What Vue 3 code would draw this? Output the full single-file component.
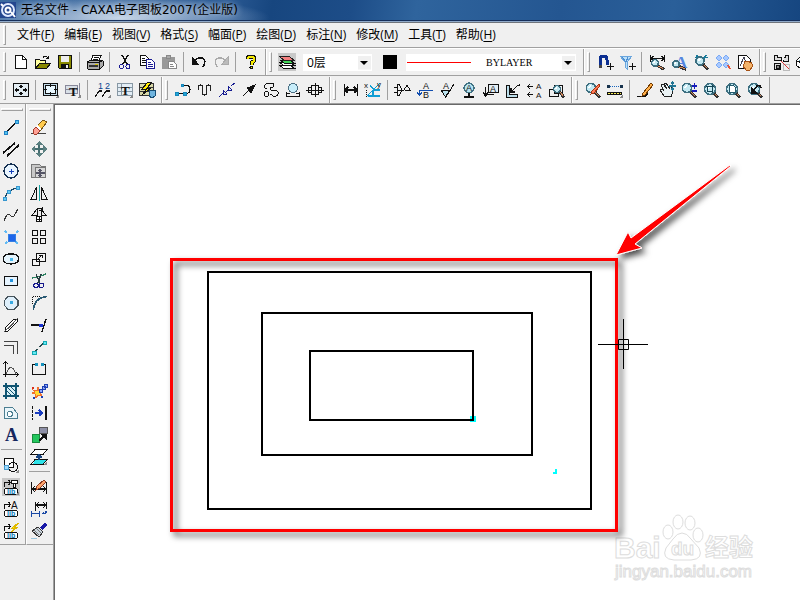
<script setup>
import { h } from 'vue'

// Shape helpers: every icon is a list of paths and letters on an 18 x 18 grid.
const K = '#111'
const p = (d, stroke = K, fill = 'none', w = 1) => ({ d, stroke, fill, w })
const t = (text, x, y, size, fill = K, family = 'Liberation Sans', weight = 400) => ({ text, x, y, size, fill, family, weight })
const circle = (x, y, r) => `M${x - r} ${y}a${r} ${r} 0 1 0 ${2 * r} 0a${r} ${r} 0 1 0 ${-2 * r} 0z`
const lens = (x, y, r) => [
  p(`M${x + r * 0.7} ${y + r * 0.7}L16 16.5`, '#333', 'none', 3),
  p(`M${x + r} ${y + r}L15.5 15.5`, '#d98a5a'),
  p(circle(x, y, r), '#3d6f80', '#c4e9f2', 1.6),
  p(`M${x - r / 2} ${y}l${r / 2} ${-r / 2}`, '#fff', 'none', 1.5)
]
const corner = p('M17 13v4h-4z', 'none', '#888')
const plusMark = p('M14.5 10v7M11 13.5h7')
const lib = [
  p('M3.5 10.5h11l1 1v4l-1 1h-11l-1-1v-4z', K, '#fff', 1),
  t('lib', 5, 16, 7, '#0879b8', 'Liberation Sans', 700)
]
const bend = p('M2.5 8.5v-4h6M6.5 2l2 2.5-2 2.5', K, 'none', 1.2)

const icons = {
  'New': [p('M3.5 2.5h7l4 4v9h-11z', K, '#fff'), p('M10.5 2.5v4h4')],
  'Open': [p('M1.5 15.5v-9h4l1 1h5v3', K, '#ffffa0'), p('M1.5 15.5l4-5h11l-4 5z', K, '#8a8a00'), p('M9 4.5q3-3 5 .5M14.5 2.5v3h-3')],
  'Save': [p('M2.5 2.5h13v13h-12l-1-1z', K, '#8a8a00'), p('M5 3h8v6H5z', 'none', '#eee'), p('M5 11h8v5H5z', 'none', K), p('M10 12h2v3h-2z', 'none', '#eee')],
  'Print': [p('M5 8l2-5.5h8L13 8z', K, '#fff'), p('M7.5 4.5h5M6.5 6.5h5'), p('M1.5 9l3-2h11l1.5 1v5l-3 3h-12z', K, '#aaa'), p('M2 9.5h11.5v6M13.5 9l3-1.5'), p('M3 13h9', '#333', 'none', 2), p('M9 11.5h3', '#d8c400', 'none', 1)],
  'Cut': [p('M6 2l5 9M12 2L7 11', K, 'none', 1.4), p(circle(5.5, 13.5, 2), '#1c1c94'), p(circle(12, 13.5, 2), '#1c1c94')],
  'Copy': [p('M2.5 2.5h5l3 3v7h-8z', K, '#fff'), p('M4 5.5h3M4 7.5h4M4 9.5h4'), p('M8.5 6.5h5l3 3v6h-8z', '#1c1c94', '#fff'), p('M10 9.5h3M10 11.5h5M10 13.5h5', '#1c1c94')],
  'Paste': [p('M2 4h12v11H2z', '#999', '#999'), p('M6 2h4v3H6z', '#888', '#aaa'), p('M8.5 8.5h5l3 3v4h-8z', '#888', '#fff'), p('M10 11.5h3M10 13.5h4', '#888')],
  'Undo': [p('M4 9Q7 4 12 5q5 2 1 9', K, 'none', 1.7), p('M2 4v7h6z', K, K)],
  'Redo': [p('M14 9Q11 4 6 5q-5 2-1 9', '#aaa', 'none', 1.4), p('M16 4v7h-6z', '#aaa', '#bbb')],
  'Help': [p('M5.5 6Q5.5 3.5 9 3.5t3.5 3Q12.5 9 9.5 9.5v2', K, 'none', 4), p(circle(9.5, 14.5, 1.5), K, '#f4e900'), p('M5.5 6Q5.5 3.5 9 3.5t3.5 3Q12.5 9 9.5 9.5v2', '#f4e900', 'none', 2)],
  'Layers': [p('M1 12h10l6 3.5H6zM1 9h10l6 3.5H6z', K, '#fff'), p('M2 7h9l6 3.5H7z', K, '#43d65a'), p('M1 3h10l5 4.5H6z', '#222', '#f58080')],
  'Snap': [p('M4 13V7q0-4 3.5-4T11 7v5', '#0c2f91', 'none', 3), p('M2.5 12h3v3h-3z', 'none', '#444'), plusMark],
  'Filter': [p('M2 3h12L9 9v7l-2-2V9z', '#6ba6dd', '#bde1fa'), p('M4 4l4 5 2-5', '#4b8ed2'), plusMark],
  'Check dimension': [p('M2.5 2v7M16.5 2v7M3 5.5h13M6 3L3 5.5 6 8M13 3l3 2.5L13 8', K, 'none', 1.2), ...lens(7, 10, 3.4)],
  'Check text': [t('A', 5, 15, 17, '#5585df', 'Liberation Serif', 700), ...lens(6, 11, 3)],
  'Check drawing': [p('M3 4.5h13M5 2v5M14 2L7 13', '#177a9a', 'none', 1.5), ...lens(8, 8, 4)],
  'Check blocks': [p('M5 2l3 3-3 3-3-3zM12 2l3 3-3 3-3-3zM5 9l3 3-3 3-3-3zM12 9l3 3-3 3-3-3z', '#79a9f5', '#a8c9ff'), p('M14 12l2 4', '#e65335', 'none', 2)],
  'Pan page': [p('M2.5 2.5h8l4 4v9h-12z', K, '#fff'), p('M4 13l4-9 3 8', '#445'), p('M8 11v-2q1-1 2 0 1-2 2 0 2-1 2 1 2-1 2 1v3l-2 3h-4l-3-4z', '#a65216', '#f4b36a')],
  'Nest parts': [p('M2.5 2.5h3v2h4v3h-7zM12 4.5h1.5v-2h3v6h-5v-2M2.5 10.5h6v6h-6z', K, '#ddd'), p('M4 12h3v3H4z', K, '#888'), p('M11 11h6v6h-6z', '#bbb'), p('M9 8l8 8', '#db3535')],
  'Assemble': [p('M2 8l5-5 7 2v7l-7 4-5-4zM2 8l7 2v6M9 10l5-5', K, '#fff'), p('M5 7l4 2', '#62a9bb')],

  'Fit window': [p('M1.5 2.5h15v13h-15z', K, '#e4edf3'), p('M9 4v10M3 9h12M7 6l2-2 2 2M7 12l2 2 2-2M5 7L3 9l2 2M13 7l2 2-2 2', K, 'none', 1.2), p('M7 7h4v4H7z', 'none', '#e4edf3')],
  'Frame': [p('M1.5 2.5h14v12h-14z', K, '#c4dcea', 1), p('M3.5 4.5h10v8h-10z', K, '#e8f7ff', 1), p('M8.5 2v4M8.5 11v4M1 8.5h4M12 8.5h4'), corner],
  'Title block': [p('M1.5 4.5h12v8h-12zM1.5 8.5h12M15.5 2v14', '#889', '#d8e0e8'), t('T', 5, 15, 13, K, 'Liberation Serif', 700), corner],
  'Numbering': [t('1', 4, 8, 9, '#08438f'), t('2', 11, 8, 9, '#08438f'), p('M1 16l4-6h3M8 16l4-6h4', K, 'none', 1.2), corner],
  'Text table': [p('M1.5 2.5h15v12h-15zM1.5 6.5h15M1.5 10.5h15M5.5 2.5v12', '#8898a4', '#e3edf5'), t('T', 5, 14, 13, K, 'Liberation Serif', 700), corner],
  'Library': [p('M1.5 2.5h14v12h-14zM1 6.5h14M1 10.5h14', '#333', '#d8d8a8'), p('M10 1L4 8h5l-5 6 9-7H9l5-6z', '#111', '#ffe900'), p('M11 9h6v6l-3 2-3-2z', '#174e75', '#70b5df')],
  'Polyline': [p('M3 12.5h8'), p('M9 4.5h3q4 0 4 4t-4 4h-1', K, 'none', 1.2), p('M1 11h3v3H1zM9 11h3v3H9zM7 3h2v2H7z', '#1686bb', '#23a6d5')],
  'Wave': [p('M2.5 9V6q0-2 2-2t2 2v5q0 3 2 3t2-3V6q0-2 2-2t2 2v4', '#222', 'none', 1.2)],
  'Broken line': [p('M1 16l4-4M5 9v4h4M5 9l4 4M10 5v4h4M10 5l4 4M8 11l3-3M13 5l4-3', '#161c91')],
  'Arrow': [p('M3 15l7-7', K, 'none', 1.3), p('M15 4l-4 8-4-5z', K, K)],
  'Outline': [p('M5 8Q1 7 3 4q2-3 5-1 3-2 4 1 0 3-4 3 0 3 5 2 4 1 3 4-1 3-5 2-1-2-3-2', K), p(circle(4.5, 13, 2.5))],
  'Detail view': [p('M2.5 16v-4l3 1M15.5 16v-4l-3 1M2 15.5h14'), p(circle(9, 7, 4.5), '#4d7185', '#c7edfa')],
  'Shaft': [p('M5.5 4.5h7v9h-7zM2.5 6.5h3v5h-3zM12.5 6.5h3v5h-3zM0 9.5h18M9.5 2v14', K, 'none', 1)],
  'Dimension': [p('M2.5 3v12M15.5 3v12M3 9h12M6 6L3 9l3 3M12 6l3 3-3 3', K, 'none', 1.5)],
  'Coordinate dimension': [p('M4 15h12M3 15l7-7 6-6M10 9L6 4M10 9h6M9 9v6', '#109ed4', 'none', 1.3), t('x', 0, 7, 8), t('y', 13, 6, 8), { ...p('M2.5 9v8'), dash: '1 1' }],
  'Datum': [p('M3 3.5h2q5 5 0 11H3M3 3v12M3 9.5h5M0 6.5h4M0 11.5h4', K), p('M8 9h2l3-5 3 5h-5', K)],
  'Text leader': [t('A', 7, 8, 9), t('B', 7, 17, 9), p('M3 9.5h14M3.5 9v4M1 11l2.5 3L6 11', '#114dae', 'none', 1.3)],
  'Roughness': [p('M3 9h9l-4.5 7zM8 16l8-13', K, '#bce3ef', 1), t('A', 5, 8, 9)],
  'Weld mark': [p(circle(9, 7, 5), '#427384', '#b9e4ef', 1.3), t('A', 6, 10, 9), p('M9 12v3M4 16h10', K, 'none', 2)],
  'Cut view': [p('M6.5 3.5h10v8h-10z', K, '#e2edf4'), t('A', 8, 11, 9), p('M12 13.5H3.5V6M1 11l2.5 4L6 11', K, 'none', 1.2)],
  'Chamfer mark': [p('M2.5 4.5v12h11v-3h-8v-9z', K, '#bbdde9'), p('M7 11l5-5q1-2 4-2M7 7v4h4', K, 'none', 1.3)],
  'Section mark': [t('A', 10, 8, 8), t('A', 10, 17, 8), p('M2 5.5h5M4 3L2 5.5 4 8M2 13.5h5M4 11l-2 2.5L4 16')],
  'Find detail': [p('M1.5 8.5h9v7h-9zM6.5 4.5h8v8h-8z'), ...lens(9, 8, 3.5)],
  'Edit query': [...lens(7, 7, 4.5), p('M15 3L8 10l-1 3 3-1 6-7z', '#a53310', '#ff7956')],
  'Measure': [{ ...p('M4 5.5h10', '#1a66bd'), dash: '1 1' }, p('M1 4h3v3H1zM14 4h3v3h-3z', 'none', '#17324c'), p('M1 12.5h15', K, 'none', 3), { ...p('M2 12.5h13', '#f7ec56'), dash: '2 1' }, corner],
  'Redraw': [p('M1 15.5h7q3 0 4-4', K, 'none', 1.2), p('M15 2L7 12l-1 3 3-1 8-10z', '#6f3900', '#ffaf4a')],
  'Pan': [p('M6 15l-4-6 2-1 2 2-3-6 2-1 4 5-3-6 2 0 4 6-1-4 2 0 2 6-2 6z', '#222', '#eaf2f4'), p('M14.5 1v8M11 5h7M13 3l1.5-2L16 3M13 7l1.5 2L16 7', '#227694', 'none', 1.2)],
  'Zoom step': [...lens(7, 7, 4.5), p('M14.5 2v6M12 5h5M12 10h5', '#161cba', 'none', 1.4)],
  'Zoom window': [...lens(8, 8, 5.5), p('M5.5 5.5h5v5h-5zM4 5.5h8M10.5 4v8', '#134454')],
  'Zoom page': [...lens(8, 8, 5.5), p('M5.5 4.5h4l2 2v5h-6z', '#245a6c', '#fff')],
  'Zoom previous': [...lens(8, 8, 5.5), p('M5 6v6h6z', K, K), p('M7 10l4-5q3-2 4 2', K, 'none', 1.5)],

  'Line': [p('M3 15L15 4', K, 'none', 1.4), p('M2.5 13.5h3v3h-3zM13.5 2.5h3v3h-3z', '#2182c5', '#54c4ed')],
  'Parallel lines': [p('M1 13L13 3M5 16L17 5', K, 'none', 1.7)],
  'Circle': [p(circle(9, 9, 7), '#143052', '#e9f5ff', 1.4), p('M7 9.5h5M9.5 7v5', '#1440bb', 'none', 1.2)],
  'Arc': [p('M3 15Q4 6 15 4', '#174966', 'none', 1.4), p('M1.5 13.5h3v3h-3zM5.5 6.5h3v3h-3zM14 2.5h3v3h-3z', '#3696cf', '#64cdf4')],
  'Spline': [p('M2 15Q5 6 8 9t4 1 4-7', '#333', 'none', 1.2)],
  'Point': [p('M6 6h7v7H6z', '#347fe4', '#1d66ea'), p('M3 3l2 2M16 3l-2 2M3 16l2-2M16 16l-2-2', '#63bbf4', 'none', 2)],
  'Ellipse': [p('M1.5 9q0-5 7.5-5t7.5 5-7.5 5-7.5-5z', K, '#e5f3fb', 1.3), p('M8 8h3v3H8z', 'none', '#49b8ed')],
  'Rectangle': [p('M2.5 4.5h13v9h-13z', K, '#e6f4ff', 1), p('M8 7h3v3H8z', 'none', '#2494de')],
  'Polygon': [p('M6 2.5h6l4 4v5l-4 4H6l-3.5-4v-5z', '#47545c', '#deeffb', 1.1), p('M8 7h3v3H8z', 'none', '#36a9e2')],
  'Slot': [p('M3 12L12 3h3v3l-9 9H3z', K, '#fff'), p('M2 16L16 2M6 13l6-6', '#555')],
  'Offset': [p('M2 3.5h13.5v12M2 7.5h9.5v8', '#444', 'none', 1.1)],
  'Axes': [p('M3.5 2v15M1 14.5h15M1 4l2.5-2L6 4M14 12l2 2.5-2 2.5'), p('M4 14q5-13 10 0', '#555')],
  'Hatch': [p('M3.5 3.5h11v11h-11z', '#0f5370', '#d9f0f7', 1), p('M1 4h16M1 14h16M4 1v16M14 1v16', '#0f5370', 'none', 1.5), p('M4 4l10 10M8 4l6 6M4 8l6 6', '#0f5370')],
  'Region': [p('M2.5 3.5h8l5 6v5h-13z', '#4c7e91', '#e9f5fa'), p(circle(8, 10, 2.5), '#4c7e91', '#fff')],
  'Text': [t('A', 3, 15, 18, '#15265d', 'Liberation Serif', 700)],
  'Block': [p('M2.5 2.5h9v9h-9z', K, '#fff'), p(circle(11, 11, 4.5)), p('M2 9h4v4H2z', '#4a9acd', '#9fdcff'), corner],
  'Extract part': [bend, p('M9.5 2.5h6v3h-6zM11.5 6v3h2V6', K, '#fff'), ...lib, corner],
  'Insert part': [bend, t('A', 9, 9, 10), ...lib],
  'Drive part': [bend, p('M16 1l-6 5h3l-4 4 7-5h-3l4-4z', '#e0b900', '#ffee00'), ...lib],

  'Erase': [p('M1 15.5h15', '#444'), p('M6 9l7-7 4 2-7 9z', '#765315', '#ffca4d'), p('M6 9l4 4-3 3H4l-1-4z', '#a33a2b', '#ffa195'), p('M7 8l4 4', '#fff', 'none', 2)],
  'Move': [p('M9 2v14M2 9h14', '#456e70', 'none', 2), p('M9 1l4 4H5zM9 17l4-4H5zM1 9l4-4v8zM17 9l-4-4v8z', 'none', '#5a7f80')],
  'Copy shape': [p('M1.5 2.5h8l2 2h4v11h-14z', '#777', '#c8c8c8'), p('M5.5 5.5h10v10h-10z', '#777', '#d8d8d8'), p('M10 7v8M6 11h9M8 9l2-2 2 2M8 13l2 2 2-2', '#556', 'none', 1.3)],
  'Mirror': [p('M6.5 3v12.5H1zM11.5 3v12.5h5.5z', K, '#eee'), p('M9 1v16', '#14a3a1', 'none', 1)],
  'Rotate': [p('M7 3L2 9.5h5zM11 3l5 6.5h-5zM6 3.5q3-3 7 0M12 1v3h-3', K, '#eee'), p(circle(9, 13, 3), K, '#fff'), p('M9 11v4M7 13h4')],
  'Array': [p('M2.5 2.5h5v5h-5zM10.5 2.5h5v5h-5zM2.5 10.5h5v5h-5zM10.5 10.5h5v5h-5z', K, 'none', 1)],
  'Scale': [p('M6.5 3.5h9v8h-9zM2.5 9.5h7v6h-7z', K, '#f4f4f4'), p('M8 9l4-4M9 5h3v3')],
  'Trim': [p('M2 6q8-1 14-4', '#2a8060', 'none', 1.3), p('M6 2l4 9M11 2L8 11', '#263b40', 'none', 1.3), p(circle(6, 13.5, 2.2) + circle(11.5, 13.5, 2.2), '#15188c', 'none', 1.2)],
  'Fillet': [p('M3.5 16Q4 4 17 2.5', '#295973', 'none', 1.6), { ...p('M2.5 10V2.5H10'), dash: '1 1' }],
  'Extend': [p('M1 9h8M12 16l4-13', K, 'none', 1.4), p('M9 8h3v2H9z', '#1730d2', '#1730d2')],
  'Break': [p('M3 15L15 4', '#27484c', 'none', 1.2), p('M2 13h4v3H2zM13 3h3v3h-3z', '#15a9b4', '#65eaf2'), p('M7 11l2-2', '#eee', 'none', 2)],
  'Stretch frame': [p('M2.5 4.5v10h13v-10M2 4.5h4M12 4.5h4', K, 'none', 1), p('M5 3h3v3H5zM11 3h3v3h-3z', 'none', '#1592be')],
  'Explode': [p('M3 8l4 1 1-4 1 4 4-1-3 3 2 3-4-1-2 3-1-4-3-1 3-1z', '#f1702c', '#ffda33'), p('M9 7h3v3H9zM12 4h3v3h-3zM14 2h3v3h-3z', '#1d3fb0', '#8fa7ff'), p('M3 15h2v2H3zM11 14h2v2h-2z', 'none', '#1d3fb0'), p('M2 5h2v2H2z', 'none', '#da301b')],
  'Align': [{ ...p('M2.5 2v14', K), dash: '3 1' }, p('M15.5 2v14', K, 'none', 2), p('M5 9h7M9 6l3 3-3 3', '#1a3dbf', 'none', 2)],
  'Change colour': [p('M2 8h7v8H2z', '#178a3d', '#23c65d'), p('M9 1h8v6H9z', '#555', '#8d8fa6'), p('M9 15l6-6', K, 'none', 1.8), p('M11 8h5v5z', K, K)],
  'Project': [p('M5 1.5h12l-4 5H1zM5 11.5h12l-4 5H1z', K, '#fff'), p('M5 12h11l-3 4H3z', 'none', '#2ee2e8'), p('M9 6v6M6 9h6M7 8l2-2 2 2', '#184480', 'none', 1.2), corner],
  'Edit dimension': [p('M1.5 4v12M16.5 4v12M2 11h14M5 8l-3 3 3 3M13 8l3 3-3 3', K, 'none', 1.4), p('M14 2L7 8l-1 4 4-2 6-6z', '#8b3922', '#ffa46b')],
  'Move dimension': [p('M5.5 2v9M16.5 2v7M6 5h10M9 2L6 5l3 3M13 2l3 3-3 3', K, 'none', 1.4), p('M1 13.5h9M1.5 11v6M9.5 11v6M16 11v2l-4 1M14 12l-2 2', '#1a49a5', 'none', 1.2)],
  'Match format': [p('M16 2l-5 5', '#1919a6', 'none', 3.5), p('M8 5l5 5-4 5-7-6z', '#333', '#cbd6df'), p('M4 8l5 5M6 6l5 5', '#777'), p('M1 16h6', '#9dc6dd')]
}

// Draws one icon from its list of shapes.
const Icon = (props) => h('svg', { width: 18, height: 18, viewBox: '0 0 18 18', 'shape-rendering': 'crispEdges', 'aria-hidden': 'true' },
  icons[props.name].map((s) => s.text
    ? h('text', { x: s.x, y: s.y, 'font-size': s.size, fill: s.fill, 'font-family': s.family + ', sans-serif', 'font-weight': s.weight }, s.text)
    : h('path', { d: s.d, stroke: s.stroke, fill: s.fill, 'stroke-width': s.w, 'stroke-dasharray': s.dash })))
Icon.props = ['name']

const menus = [['文件', 'F'], ['编辑', 'E'], ['视图', 'V'], ['格式', 'S'], ['幅面', 'P'], ['绘图', 'D'], ['标注', 'N'], ['修改', 'M'], ['工具', 'T'], ['帮助', 'H']]

// An empty name stands for a separator.
const standard = ['New', 'Open', 'Save', '', 'Print', '', 'Cut', 'Copy', 'Paste', '', 'Undo', 'Redo', '', 'Help']
const rowOneTail = [
  ['Snap', 'Filter', '', 'Check dimension', 'Check text', 'Check drawing', 'Check blocks', 'Pan page'],
  ['Nest parts', 'Assemble']
]
const rowTwo = [
  ['Fit window', '', 'Frame', 'Title block', '', 'Numbering', 'Text table', 'Library'],
  ['Polyline', 'Wave', 'Broken line', 'Arrow', 'Outline', 'Detail view', 'Shaft'],
  ['Dimension', 'Coordinate dimension', '', 'Datum', 'Text leader', 'Roughness', 'Weld mark', 'Cut view', 'Chamfer mark', 'Section mark', 'Find detail'],
  ['Edit query', 'Measure', '', 'Redraw', 'Pan', 'Zoom step', 'Zoom window', 'Zoom page', 'Zoom previous']
]
const palettes = [
  ['Line', 'Parallel lines', 'Circle', 'Arc', 'Spline', 'Point', 'Ellipse', 'Rectangle', 'Polygon', 'Slot', 'Offset', 'Axes', 'Hatch', 'Region', 'Text', '', 'Block', 'Extract part', 'Insert part', 'Drive part'],
  ['Erase', 'Move', 'Copy shape', 'Mirror', 'Rotate', 'Array', 'Scale', 'Trim', 'Fillet', 'Extend', 'Break', 'Stretch frame', 'Explode', 'Align', 'Change colour', 'Project', '', 'Edit dimension', 'Move dimension', 'Match format']
]
const pressed = new Set(['Extract part'])
</script>

<template>
  <div class="app">
    <header class="title">
      <svg class="logo" width="16" height="16" viewBox="0 0 16 16" aria-hidden="true">
        <rect width="16" height="16" fill="#24478f" />
        <circle cx="8" cy="8" r="6" fill="none" stroke="#dfeaff" stroke-width="2" />
        <circle cx="8" cy="8" r="2.5" fill="none" stroke="#fff" stroke-width="2" />
        <path d="M11 10l4 5M1 2l2 2" stroke="#fff" stroke-width="2" />
      </svg>
      <h1>无名文件 - CAXA电子图板2007(企业版)</h1>
    </header>

    <nav class="menu">
      <span class="grip"></span>
      <button v-for="[label, key] in menus" :key="key" type="button">{{ label }}(<u>{{ key }}</u>)</button>
    </nav>

    <div class="bars">
      <div class="bar">
        <span class="grip"></span>
        <template v-for="(name, i) in standard" :key="i">
          <button v-if="name" class="tool" type="button" :aria-label="name"><Icon :name="name" /></button>
          <span v-else class="sep"></span>
        </template>
      </div>
      <div class="bar">
        <span class="grip"></span>
        <button class="tool pressed" type="button" aria-label="Layers"><Icon name="Layers" /></button>
        <span class="combo layer"><select aria-label="Layer"><option>0层</option></select></span>
        <button class="swatch" type="button" aria-label="Colour"></button>
        <span class="combo style"><select aria-label="Line style"><option>BYLAYER</option></select></span>
      </div>
      <div v-for="(group, g) in rowOneTail" :key="g" class="bar">
        <span class="grip"></span>
        <template v-for="(name, i) in group" :key="i">
          <button v-if="name" class="tool" type="button" :aria-label="name"><Icon :name="name" /></button>
          <span v-else class="sep"></span>
        </template>
      </div>
    </div>

    <div class="bars last">
      <div v-for="(group, g) in rowTwo" :key="g" class="bar">
        <span class="grip"></span>
        <template v-for="(name, i) in group" :key="i">
          <button v-if="name" class="tool" type="button" :aria-label="name"><Icon :name="name" /></button>
          <span v-else class="sep"></span>
        </template>
      </div>
    </div>

    <main class="work">
      <aside class="side">
        <div v-for="(group, g) in palettes" :key="g" class="palette">
          <span class="grip"></span>
          <template v-for="(name, i) in group" :key="i">
            <button v-if="name" class="tool" :class="{ pressed: pressed.has(name) }" type="button" :aria-label="name"><Icon :name="name" /></button>
            <span v-else class="sep"></span>
          </template>
        </div>
      </aside>
      <section class="canvas">
        <svg class="drawing" width="100%" height="100%">
          <defs>
            <filter id="shade" x="-20%" y="-20%" width="150%" height="150%">
              <feDropShadow dx="4" dy="4" stdDeviation="3" flood-color="#000" flood-opacity=".7" />
            </filter>
          </defs>
          <g transform="translate(-55 -105)">
            <g class="mark">
              <text x="614" y="558" font-size="30">Bai</text>
              <ellipse cx="668" cy="532" rx="5" ry="7" />
              <ellipse cx="678" cy="522" rx="5" ry="7" />
              <ellipse cx="690" cy="523" rx="5" ry="7" />
              <ellipse cx="698" cy="535" rx="5" ry="7" />
              <path d="M682 533q5 0 9 6l8 9q5 11-8 12h-17q-13-1-8-12l7-9q4-6 9-6z" />
              <text x="671" y="555" font-size="19">du</text>
              <text x="705" y="556" font-size="24">经验</text>
              <text class="site" x="615" y="577" font-size="17">jingyan.baidu.com</text>
            </g>
            <g fill="none" stroke="#000" stroke-width="2">
              <rect x="208" y="272" width="383" height="237" />
              <rect x="262" y="313" width="270" height="142" />
            </g>
            <rect x="470" y="416" width="6" height="6" fill="#0ff" />
            <rect x="310" y="351" width="163" height="69" fill="none" stroke="#000" stroke-width="2" />
            <path d="M555 469h2v5h-4v-2h2z" fill="#0ff" shape-rendering="crispEdges" />
            <rect x="171.5" y="259.5" width="445" height="271" fill="none" stroke="#f00" stroke-width="3" filter="url(#shade)" />
            <path d="M598 344.5h50M623.5 319v50M618.5 339.5h10v10h-10z" fill="none" stroke="#000" />
            <path d="M616 255l12-23 3 6L730 165l1 1-96 78 7 4z" fill="#f00" stroke="#fff" filter="url(#shade)" />
          </g>
        </svg>
      </section>
    </main>
  </div>
</template>

<style>
body { margin: 0; overflow: hidden; }
</style>

<style scoped>
.app {
  display: flex;
  flex-direction: column;
  height: 100vh;
  overflow: hidden;
  background: #f0f0f0;
  color: #000;
  font: 12px/18px "Open Sans", "Noto Sans CJK SC", sans-serif;
}
button { border: 0; padding: 0; background: none; font: inherit; color: inherit; }
.title {
  display: flex;
  align-items: center;
  gap: 5px;
  height: 20px;
  border-bottom: 1px solid #16305c;
  box-shadow: 0 1px #8fa9c9, 0 2px #70757c;
  margin-bottom: 2px;
  background:
    radial-gradient(ellipse 150px 22px at 120px 18px, rgba(235, 242, 250, .8), rgba(180, 200, 225, .45) 60%, transparent),
    linear-gradient(100deg, #3c6a9f 0, #2b5a94 28%, #17467f 34%, #1d4d88 44%, #2f649d 52%, #245691 70%, #2a5f99 84%, #164680 100%);
  flex: none;
}
h1 { margin: 0; font: 400 12px/20px "DejaVu Sans", "Noto Sans CJK SC", sans-serif; text-shadow: 0 0 6px #e8f0fa; white-space: nowrap; }
.menu {
  display: flex;
  align-items: center;
  flex: none;
  height: 24px;
  padding-left: 12px;
  border-bottom: 1px solid #a0a0a0;
  box-shadow: 0 1px #fff;
  margin-bottom: 1px;
}
.menu button { padding: 0 5px; white-space: nowrap; }
.menu u { text-underline-offset: 2px; }
.grip {
  box-sizing: border-box;
  width: 3px;
  height: 20px;
  margin: 0 4px 0 3px;
  border: 1px solid #fff;
  border-right-color: #a0a0a0;
  border-bottom-color: #a0a0a0;
  flex: none;
}
.menu .grip { margin: 0 0 0 -9px; }
.menu .grip + button { margin-left: 6px; }
.bars { display: flex; flex: none; height: 26px; overflow: hidden; border-bottom: 1px solid #a0a0a0; margin-bottom: 1px; }
.bars.last { margin-bottom: 0; }
.bar { display: flex; align-items: center; flex: none; padding-right: 3px; border-right: 1px solid #a0a0a0; }
.bar + .bar { border-left: 1px solid #fff; }
.bar + .bar .grip { margin-left: 2px; }
.tool { display: flex; align-items: center; justify-content: center; flex: none; width: 22px; height: 22px; }
.tool.pressed { box-sizing: border-box; background: #c8c8c8 content-box; padding: 2px; }
.sep { flex: none; width: 1px; height: 20px; margin: 0 4px 0 3px; background: #a0a0a0; }
.combo { position: relative; height: 17px; }
.combo select {
  display: block;
  appearance: none;
  width: 100%;
  height: 17px;
  border: 0;
  border-radius: 0;
  padding: 0 16px 0 4px;
  background: #fff;
  color: #000;
  font: 12px/17px "Open Sans", "Noto Sans CJK SC", sans-serif;
}
.combo::after {
  content: "";
  position: absolute;
  top: 2px;
  right: 1px;
  width: 13px;
  height: 14px;
  background: #f0f0f0;
  clip-path: polygon(0 0, 100% 0, 100% 100%, 0 100%);
}
.combo::before {
  content: "";
  position: absolute;
  z-index: 1;
  top: 7px;
  right: 4px;
  border: 4px solid transparent;
  border-top-color: #000;
  border-bottom: 0;
}
.layer { width: 69px; margin: 0 11px 0 5px; }
.swatch { width: 14px; height: 14px; background: #000; }
.style { width: 170px; margin: 0 4px 0 9px; }
.style select {
  padding-left: 80px;
  font: 10px/17px "Liberation Serif", serif;
  background: linear-gradient(#f00, #f00) 1px 8px / 64px 1px no-repeat #fff;
}
.work { display: flex; flex: 1; min-height: 0; }
.side { display: flex; align-items: flex-start; flex: none; border-right: 1px solid #a0a0a0; }
.palette { display: flex; flex-direction: column; width: 25px; padding-bottom: 2px; border-bottom: 1px solid #a0a0a0; }
.palette:first-child { border-right: 1px solid #a0a0a0; }
.palette + .palette { border-left: 1px solid #fff; padding-left: 1px; }
.palette .grip { width: 22px; height: 3px; margin: 4px 1px 5px; }
.palette .sep { width: 21px; height: 1px; margin: 3px 1px 4px; }
.canvas { flex: 1; min-width: 0; background: #fff; border-top: 1px solid #696969; border-left: 1px solid #696969; overflow: hidden; }
.drawing { display: block; }
.mark { fill: #fff; stroke: #ddd; stroke-width: 1; font-family: "Liberation Sans", "Noto Sans CJK SC", sans-serif; font-weight: 700; }
.mark .site { font-weight: 400; }
</style>
